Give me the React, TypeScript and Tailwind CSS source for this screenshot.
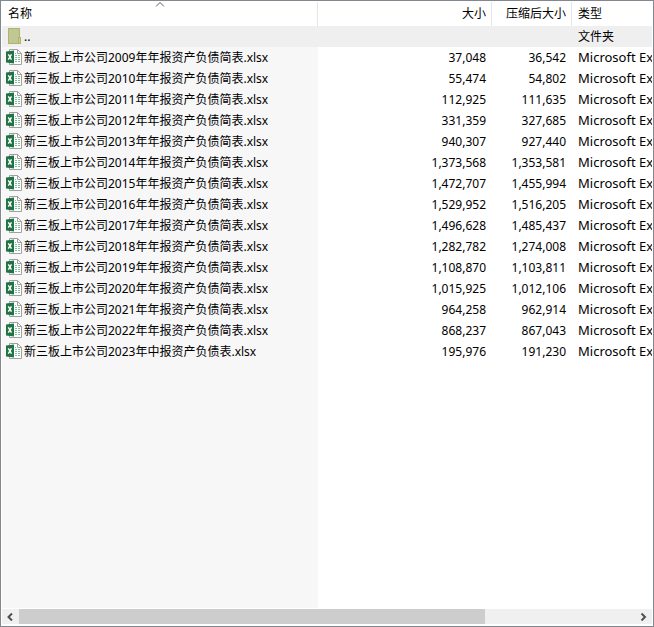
import React from "react";

type Entry = { name: string; size: string; packed: string };

const entries: Entry[] = [
  { name: "新三板上市公司2009年年报资产负债简表.xlsx", size: "37,048", packed: "36,542" },
  { name: "新三板上市公司2010年年报资产负债简表.xlsx", size: "55,474", packed: "54,802" },
  { name: "新三板上市公司2011年年报资产负债简表.xlsx", size: "112,925", packed: "111,635" },
  { name: "新三板上市公司2012年年报资产负债简表.xlsx", size: "331,359", packed: "327,685" },
  { name: "新三板上市公司2013年年报资产负债简表.xlsx", size: "940,307", packed: "927,440" },
  { name: "新三板上市公司2014年年报资产负债简表.xlsx", size: "1,373,568", packed: "1,353,581" },
  { name: "新三板上市公司2015年年报资产负债简表.xlsx", size: "1,472,707", packed: "1,455,994" },
  { name: "新三板上市公司2016年年报资产负债简表.xlsx", size: "1,529,952", packed: "1,516,205" },
  { name: "新三板上市公司2017年年报资产负债简表.xlsx", size: "1,496,628", packed: "1,485,437" },
  { name: "新三板上市公司2018年年报资产负债简表.xlsx", size: "1,282,782", packed: "1,274,008" },
  { name: "新三板上市公司2019年年报资产负债简表.xlsx", size: "1,108,870", packed: "1,103,811" },
  { name: "新三板上市公司2020年年报资产负债简表.xlsx", size: "1,015,925", packed: "1,012,106" },
  { name: "新三板上市公司2021年年报资产负债简表.xlsx", size: "964,258", packed: "962,914" },
  { name: "新三板上市公司2022年年报资产负债简表.xlsx", size: "868,237", packed: "867,043" },
  { name: "新三板上市公司2023年中报资产负债表.xlsx", size: "195,976", packed: "191,230" },
];

function FolderIcon() {
  return (
    <svg width="16" height="16" viewBox="0 0 16 16" className="mt-0.5 shrink-0 self-start" shapeRendering="crispEdges" aria-hidden="true">
      <rect x="2" y="0" width="12" height="16" fill="#b2b367" />
      <rect x="3" y="1" width="10" height="14" fill="#c0c795" />
      <rect x="12" y="9" width="3" height="7" fill="#b2b367" />
      <rect x="13" y="10" width="1" height="5" fill="#c9cd98" />
    </svg>
  );
}

function ExcelIcon() {
  return (
    <svg width="16" height="16" viewBox="0 0 16 16" className="mt-0.5 shrink-0 self-start" aria-hidden="true">
      <path d="M3.5.5h8l4 4v11h-12z" fill="#fff" stroke="#a0a0a0" />
      <path d="M11.5.5v4h4" fill="none" stroke="#a0a0a0" />
      <path d="M9 4.5h1M9 6.5h2M9 8.5h2M9 10.5h2M9 12.5h2M12 6.5h2M12 8.5h2M12 10.5h2M12 12.5h2" stroke="#7cc09a" />
      <path d="M0 2.5L8 1.5v13l-8-1z" fill="#217346" />
      <path d="M2.3 5.3l3.2 5.4M5.5 5.3L2.3 10.7" stroke="#fff" strokeWidth="1.4" />
    </svg>
  );
}

export default function App() {
  return (
    <main className="flex h-screen flex-col border border-[#828790] bg-white p-px font-['Noto_Sans','Noto_Sans_CJK_SC',sans-serif] text-xs text-black">
      <div className="min-h-0 flex-1 overflow-hidden">
        <table className="h-full w-full table-fixed border-separate border-spacing-0 whitespace-nowrap">
          <colgroup>
            <col className="w-[316px]" />
            <col className="w-[174px]" />
            <col className="w-[80px]" />
            <col />
          </colgroup>
          <thead>
            <tr className="h-6">
              <th className="relative border-r border-[#e5e5e5] p-0 font-normal" aria-sort="ascending">
                <button className="block w-full px-1.5 text-left">名称</button>
                <svg width="9" height="5" viewBox="0 0 9 5" className="absolute top-0 left-1/2 -translate-x-1/2" aria-hidden="true">
                  <path d="M.5 4.5l4-4 4 4" fill="none" stroke="#5c5c5c" />
                </svg>
              </th>
              <th className="border-r border-[#e5e5e5] p-0 font-normal">
                <button className="block w-full px-[5px] text-right">大小</button>
              </th>
              <th className="border-r border-[#e5e5e5] p-0 font-normal">
                <button className="block w-full px-[5px] text-right">压缩后大小</button>
              </th>
              <th className="p-0 font-normal">
                <button className="block w-full px-1.5 text-left">类型</button>
              </th>
            </tr>
          </thead>
          <tbody>
            <tr className="h-[21px] bg-[#efefef]">
              <td className="p-0 pl-1">
                <div className="flex h-[21px] items-center gap-0.5">
                  <FolderIcon />
                  <span>..</span>
                </div>
              </td>
              <td className="p-0" />
              <td className="p-0" />
              <td className="p-0 pl-1.5">文件夹</td>
            </tr>
            {entries.map((entry) => (
              <tr key={entry.name} className="h-[21px]">
                <td className="bg-[#f7f7f7] p-0 pl-1">
                  <div className="flex h-[21px] items-center gap-0.5">
                    <ExcelIcon />
                    <span>{entry.name}</span>
                  </div>
                </td>
                <td className="p-0 pr-1.5 text-right">{entry.size}</td>
                <td className="p-0 pr-1.5 text-right">{entry.packed}</td>
                <td className="overflow-hidden p-0 pl-1.5 align-top text-[13px] leading-5">Microsoft Excel</td>
              </tr>
            ))}
            <tr aria-hidden="true">
              <td className="bg-[#f7f7f7] p-0" />
              <td className="p-0" colSpan={3} />
            </tr>
          </tbody>
        </table>
      </div>
      <div className="mt-px mb-px flex h-[15px] shrink-0 bg-[#f0f0f0]">
        <button className="flex w-[17px] items-center justify-center" aria-label="向左滚动">
          <svg width="7" height="8" viewBox="0 0 7 8" aria-hidden="true">
            <path d="M5 .5L1.5 4 5 7.5" fill="none" stroke="#505050" strokeWidth="2" />
          </svg>
        </button>
        <div className="flex-1">
          <div className="h-full w-[75.6%] bg-[#cdcdcd]" />
        </div>
        <button className="flex w-[17px] items-center justify-center" aria-label="向右滚动">
          <svg width="7" height="8" viewBox="0 0 7 8" aria-hidden="true">
            <path d="M1.5 .5L5 4 1.5 7.5" fill="none" stroke="#505050" strokeWidth="2" />
          </svg>
        </button>
      </div>
    </main>
  );
}
